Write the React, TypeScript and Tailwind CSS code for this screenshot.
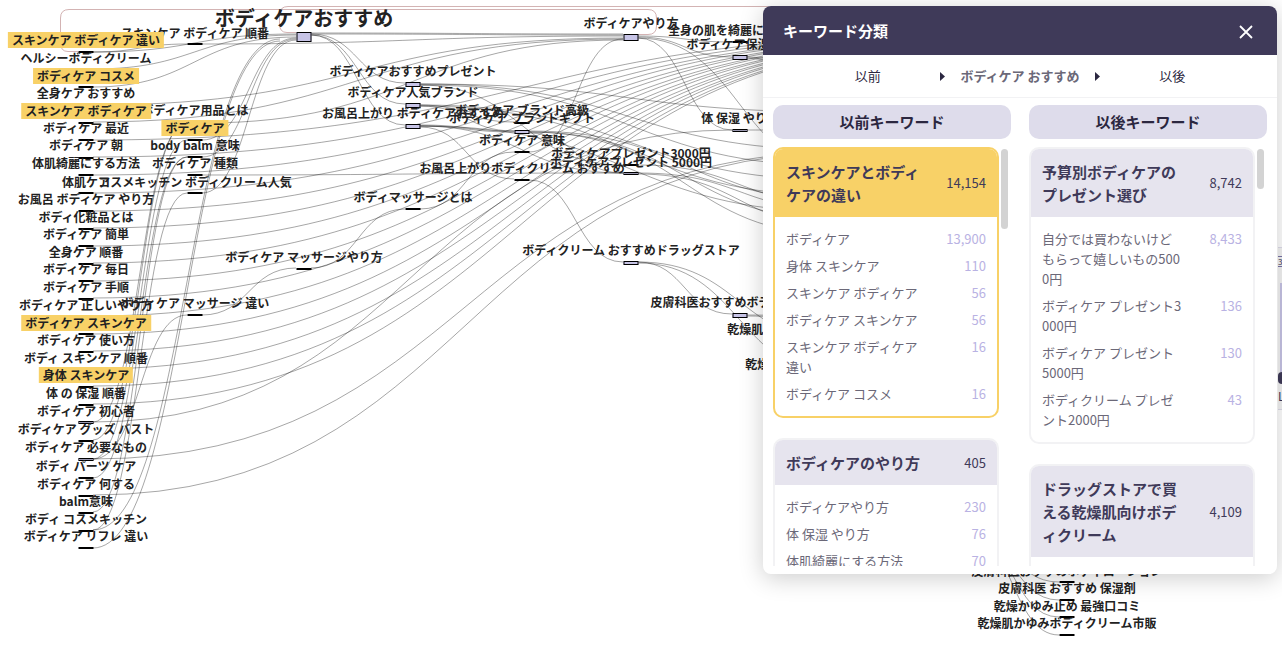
type Tone = 'flat' | 'slim' | 'fill' | 'root';

type GraphNode = {
	x: number;
	y: number;
	label: string;
	top: number;
	h?: number;
	marked?: boolean;
	root?: boolean;
};

type Group = {
	title: string;
	total: string;
	active?: boolean;
	rows: { word: string; count: string }[];
};

// columns are listed right to left, so that the left labels stay on top
const nodes: GraphNode[] = [
	{ x: 1067, y: 571, top: 581, label: '皮膚科医おすすめボディローション' },
	{ x: 1067, y: 588, top: 599, label: '皮膚科医 おすすめ 保湿剤' },
	{ x: 1067, y: 606, top: 616, label: '乾燥かゆみ止め 最強口コミ' },
	{ x: 1067, y: 623, top: 634, label: '乾燥肌かゆみボディクリーム市販' },
	{ x: 848, y: 329, top: 340, label: '乾燥肌用ボディクリーム 最強ドラッグストア' },
	{ x: 848, y: 364, top: 375, label: '乾燥肌用ボディクリーム おすすめ市販' },
	{ x: 740, y: 30, top: 41, label: '全身の肌を綺麗にする方法' },
	{ x: 740, y: 44, top: 55, h: 5, label: 'ボディケア保湿方法' },
	{ x: 740, y: 118, top: 129, h: 3, label: '体 保湿 やり方' },
	{ x: 740, y: 302, top: 313, h: 5, label: '皮膚科医おすすめボディクリーム' },
	{ x: 631, y: 23, top: 34, h: 7, label: 'ボディケアやり方' },
	{ x: 631, y: 153, top: 164, label: 'ボディケアプレゼント3000円' },
	{ x: 631, y: 162, top: 172, h: 3, label: 'ボディケアプレゼント 5000円' },
	{ x: 631, y: 250, top: 261, h: 4, label: 'ボディクリーム おすすめドラッグストア' },
	{ x: 522, y: 110, top: 122, label: 'ボディケア ブランド高級' },
	{ x: 522, y: 118, top: 130, h: 4, label: 'ボディケア ブランドギフト' },
	{ x: 522, y: 140, top: 151, label: 'ボディケア 意味' },
	{ x: 522, y: 168, top: 179, label: 'お風呂上がりボディクリーム おすすめ' },
	{ x: 413, y: 71, top: 82, h: 5, label: 'ボディケアおすすめプレゼント' },
	{ x: 413, y: 92, top: 103, h: 5, label: 'ボディケア人気ブランド' },
	{ x: 413, y: 113, top: 124, h: 5, label: 'お風呂上がり ボディケアおすすめ' },
	{ x: 413, y: 197, top: 208, label: 'ボディマッサージとは' },
	{ x: 304, y: 18, top: 32, h: 10, label: 'ボディケアおすすめ', root: true },
	{ x: 304, y: 257, top: 268, label: 'ボディケア マッサージやり方' },
	{ x: 195, y: 33, top: 43, label: 'スキンケア ボディケア 順番' },
	{ x: 195, y: 110, top: 122, label: 'ボディケア用品とは' },
	{ x: 195, y: 128, top: 139, label: 'ボディケア', marked: true },
	{ x: 195, y: 145, top: 156, label: 'body balm 意味' },
	{ x: 195, y: 163, top: 174, label: 'ボディケア 種類' },
	{ x: 195, y: 182, top: 192, label: 'コスメキッチン ボディクリーム人気' },
	{ x: 195, y: 303, top: 314, label: 'ボディケア マッサージ 違い' },
	{ x: 86, y: 40, top: 51, label: 'スキンケア ボディケア 違い', marked: true },
	{ x: 86, y: 58, top: 68, label: 'ヘルシーボディクリーム' },
	{ x: 86, y: 76, top: 86, label: 'ボディケア コスメ', marked: true },
	{ x: 86, y: 93, top: 104, label: '全身ケア おすすめ' },
	{ x: 86, y: 111, top: 122, label: 'スキンケア ボディケア', marked: true },
	{ x: 86, y: 128, top: 139, label: 'ボディケア 最近' },
	{ x: 86, y: 145, top: 157, label: 'ボディケア 朝' },
	{ x: 86, y: 163, top: 174, label: '体肌綺麗にする方法' },
	{ x: 86, y: 182, top: 192, label: '体肌ケア' },
	{ x: 86, y: 199, top: 210, label: 'お風呂 ボディケア やり方' },
	{ x: 86, y: 217, top: 228, label: 'ボディ化粧品とは' },
	{ x: 86, y: 234, top: 245, label: 'ボディケア 簡単' },
	{ x: 86, y: 252, top: 263, label: '全身ケア 順番' },
	{ x: 86, y: 269, top: 280, label: 'ボディケア 毎日' },
	{ x: 86, y: 287, top: 298, label: 'ボディケア 手順' },
	{ x: 86, y: 305, top: 316, label: 'ボディケア 正しいやり方' },
	{ x: 86, y: 323, top: 333, label: 'ボディケア スキンケア', marked: true },
	{ x: 86, y: 340, top: 351, label: 'ボディケア 使い方' },
	{ x: 86, y: 358, top: 368, label: 'ボディ スキンケア 順番' },
	{ x: 86, y: 375, top: 386, label: '身体 スキンケア', marked: true },
	{ x: 86, y: 393, top: 404, label: '体 の 保湿 順番' },
	{ x: 86, y: 411, top: 421, h: 3, label: 'ボディケア 初心者' },
	{ x: 86, y: 429, top: 440, label: 'ボディケア グッズ バスト' },
	{ x: 86, y: 447, top: 458, h: 3, label: 'ボディケア 必要なもの' },
	{ x: 86, y: 466, top: 477, label: 'ボディ パーツ ケア' },
	{ x: 86, y: 484, top: 495, label: 'ボディケア 何する' },
	{ x: 86, y: 501, top: 512, label: 'balm意味' },
	{ x: 86, y: 519, top: 530, label: 'ボディ コスメキッチン' },
	{ x: 86, y: 536, top: 547, label: 'ボディケア リフレ 違い' },
];

// [x0, y0, x1, y1]
const links: [number, number, number, number][] = [
	[93, 52, 187, 44], [93, 52, 296, 34], [93, 69, 296, 35], [93, 87, 296, 37],
	[93, 105, 623, 38], [93, 122, 623, 39], [202, 123, 623, 40], [202, 44, 623, 36],
	[93, 140, 950, 36], [93, 157, 950, 37], [93, 175, 950, 38], [93, 193, 950, 38],
	[93, 211, 950, 39], [93, 228, 950, 39], [93, 246, 950, 40], [93, 263, 950, 40],
	[93, 281, 950, 41], [93, 298, 950, 41], [93, 316, 950, 42], [93, 334, 950, 42],
	[93, 351, 950, 43], [93, 369, 950, 43], [93, 386, 950, 44], [93, 404, 950, 44],
	[93, 422, 732, 130], [93, 459, 841, 152], [93, 495, 841, 153],
	[93, 422, 187, 123], [93, 440, 187, 123], [93, 459, 187, 140], [93, 478, 187, 157],
	[93, 512, 187, 157], [93, 530, 187, 193], [93, 459, 187, 315],
	[93, 530, 280, 39], [93, 548, 280, 41],
	[202, 140, 296, 38], [202, 157, 296, 39], [202, 193, 296, 40],
	[202, 175, 623, 173], [202, 315, 296, 268], [311, 268, 405, 209], [420, 209, 514, 152],
	[311, 33, 623, 34], [311, 34, 623, 35], [311, 34, 405, 83], [311, 35, 405, 104], [311, 35, 405, 125],
	[420, 84, 841, 112], [420, 84, 841, 150], [420, 85, 841, 166], [420, 85, 623, 165],
	[420, 105, 841, 180], [420, 106, 841, 196], [420, 105, 514, 122], [420, 106, 514, 131],
	[420, 125, 514, 131], [420, 126, 514, 132], [420, 126, 623, 173], [420, 126, 841, 212], [420, 127, 514, 179],
	[529, 131, 841, 200], [529, 132, 841, 220], [529, 132, 841, 235], [529, 133, 623, 173],
	[529, 152, 623, 39], [529, 180, 623, 262],
	[638, 165, 841, 204], [638, 173, 841, 210], [638, 174, 841, 226],
	[638, 36, 732, 42], [638, 37, 732, 57], [638, 38, 732, 130], [638, 38, 841, 170],
	[747, 57, 841, 86], [747, 58, 841, 100], [747, 130, 841, 130],
	[638, 262, 732, 314], [638, 262, 841, 341], [638, 263, 841, 376],
	[747, 315, 841, 318], [747, 316, 841, 324],
	[965, 530, 1059, 582], [965, 530, 1059, 600], [965, 531, 1059, 617], [965, 531, 1059, 635],
];

const before: Group[] = [
	{
		title: 'スキンケアとボディケアの違い',
		total: '14,154',
		active: true,
		rows: [
			{ word: 'ボディケア', count: '13,900' },
			{ word: '身体 スキンケア', count: '110' },
			{ word: 'スキンケア ボディケア', count: '56' },
			{ word: 'ボディケア スキンケア', count: '56' },
			{ word: 'スキンケア ボディケア 違い', count: '16' },
			{ word: 'ボディケア コスメ', count: '16' },
		],
	},
	{
		title: 'ボディケアのやり方',
		total: '405',
		rows: [
			{ word: 'ボディケアやり方', count: '230' },
			{ word: '体 保湿 やり方', count: '76' },
			{ word: '体肌綺麗にする方法', count: '70' },
		],
	},
];

const after: Group[] = [
	{
		title: '予算別ボディケアのプレゼント選び',
		total: '8,742',
		rows: [
			{ word: '自分では買わないけどもらって嬉しいもの5000円', count: '8,433' },
			{ word: 'ボディケア プレゼント3000円', count: '136' },
			{ word: 'ボディケア プレゼント 5000円', count: '130' },
			{ word: 'ボディクリーム プレゼント2000円', count: '43' },
		],
	},
	{
		title: 'ドラッグストアで買える乾燥肌向けボディクリーム',
		total: '4,109',
		rows: [],
	},
];

const curve = ([x0, y0, x1, y1]: [number, number, number, number]) => {
	const mid = (x0 + x1) / 2;
	return `M${x0} ${y0}C${mid} ${y0} ${mid} ${y1} ${x1} ${y1}`;
};

const nodeTone = (node: GraphNode): Tone => {
	if (node.root) return 'root';
	if (!node.h) return 'flat';
	return node.h > 3 ? 'fill' : 'slim';
};

const toneClass: Record<Tone, string> = {
	flat: 'bg-black',
	slim: 'border border-black bg-[#9a98b0]',
	fill: 'border border-black bg-[#c7c4e6]',
	root: 'border border-black bg-[#c7c4e6]',
};

const KeywordGraph = () => (
	<div className="absolute inset-0 overflow-hidden">
		<svg className="absolute left-0 top-0 h-full w-full" fill="none">
			<g stroke="#d3b3b3">
				<path d="M78 51.500H68Q60.500 51.500 60.500 43V18Q60.500 9.500 69 9.500H648Q656.500 9.500 656.500 18V26Q656.500 34.500 648 34.500H638" />
				<path d="M296 32.500H287Q279.500 32.500 279.500 24V15Q279.500 6.500 288 6.500H900" />
			</g>
			<g stroke="#000" strokeOpacity="0.35">
				{links.map((link, index) => (
					<path key={index} d={curve(link)} />
				))}
			</g>
		</svg>
		{nodes.map((node) => (
			<div key={`${node.x}-${node.y}`}>
				<div
					className={`absolute w-[15px] -translate-x-1/2 ${toneClass[nodeTone(node)]}`}
					style={{ left: node.x, top: node.top, height: node.h ?? 2 }}
				/>
				<div
					className={`absolute -translate-x-1/2 -translate-y-1/2 whitespace-nowrap font-bold text-[#222] ${node.root ? 'text-xl' : 'text-xs'} ${node.marked ? 'bg-[#f8d167] px-1' : ''}`}
					style={{ left: node.x, top: node.y }}
				>
					{node.label}
				</div>
			</div>
		))}
	</div>
);

// zoom control, nearly all of it lies beyond the edge or under the panel
const ZoomControl = () => (
	<div className="absolute right-0 top-[247px] flex h-[163px] w-1 flex-col overflow-hidden border-y border-[#dedceb] bg-[#f4f4f4] text-[#3f3a59]">
		<span className="mt-2 border-y border-[#7a74a8] text-[8px] leading-[9px]">3</span>
		<span className="ml-0.5 mt-4 h-[89px] bg-[#c7c4e6]" />
		<span className="h-3 rounded-l bg-[#3f3a59]" />
		<span className="mt-1 text-xs">L</span>
	</div>
);

const GroupCard = ({ group }: { group: Group }) => (
	<section className={`shrink-0 overflow-hidden rounded-[10px] border-2 ${group.active ? 'border-[#f8d167]' : 'border-[#f2f2f4]'}`}>
		<div className={`flex items-center justify-between px-[11px] py-[11px] text-[#3f3a59] ${group.active ? 'bg-[#f8d167]' : 'bg-[#e6e4ee]'}`}>
			<h3 className="w-[142px] break-all text-[15px] font-bold leading-[23px]">{group.title}</h3>
			<span className="text-[13px]">{group.total}</span>
		</div>
		<ul className="flex flex-col gap-[7px] px-[11px] py-3 text-[13px] leading-5 text-[#6b6878]">
			{group.rows.map((row) => (
				<li key={row.word} className="flex justify-between">
					<span className="w-[142px] break-all">{row.word}</span>
					<span className="text-[#b9b2e3]">{row.count}</span>
				</li>
			))}
		</ul>
	</section>
);

const GroupColumn = ({ heading, groups, thumb }: { heading: string; groups: Group[]; thumb: string }) => (
	<div className="flex min-h-0 w-0 flex-1 flex-col gap-2">
		<h2 className="rounded-[10px] bg-[#dedceb] text-center text-[15px] font-bold leading-[34px] text-[#2b2740]">{heading}</h2>
		<div className="flex min-h-0 flex-1 gap-0.5 overflow-hidden">
			<div className="flex flex-1 flex-col gap-5">
				{groups.map((group) => (
					<GroupCard key={group.title} group={group} />
				))}
			</div>
			<div className="w-2.5 pr-[3px] pt-0.5">
				<div className={`rounded-full bg-[#d3d3d3] ${thumb}`} />
			</div>
		</div>
	</div>
);

const Caret = () => (
	<svg width="5" height="9" viewBox="0 0 5 9" fill="#2b2740">
		<path d="M0 0L5 4.500L0 9Z" />
	</svg>
);

const KeywordPanel = () => (
	<aside className="relative mr-[5px] mt-1.5 flex h-[568px] w-[514px] flex-col overflow-hidden rounded-lg bg-white shadow-[0_4px_24px_rgba(0,0,0,0.2)]">
		<header className="flex h-[49px] shrink-0 items-center justify-between bg-[#3f3a59] px-5 pt-0.5 text-white">
			<h1 className="text-[15px] font-bold">キーワード分類</h1>
			<button type="button" aria-label="閉じる" className="p-1">
				<svg width="14" height="14" viewBox="0 0 14 14" fill="none" stroke="currentColor" strokeWidth="1.800">
					<path d="M1 1L13 13M13 1L1 13" />
				</svg>
			</button>
		</header>
		<div className="flex h-[43px] shrink-0 items-center border-b border-[#f2f2f4] text-[13px] text-[#2b2740]">
			<span className="flex-1 pl-8 text-center">以前</span>
			<div className="flex items-center gap-[15px]">
				<Caret />
				<strong className="font-bold text-[#6b6878]">ボディケア おすすめ</strong>
				<Caret />
			</div>
			<span className="flex-1 pr-8 text-center">以後</span>
		</div>
		<div className="flex min-h-0 flex-1 gap-[18px] px-2.5 pb-2 pt-[7px]">
			<GroupColumn heading="以前キーワード" groups={before} thumb="h-20" />
			<GroupColumn heading="以後キーワード" groups={after} thumb="h-10" />
		</div>
	</aside>
);

export default function App() {
	return (
		<main className="relative flex min-h-screen items-start justify-end overflow-hidden bg-white font-['Noto_Sans_CJK_JP','Noto_Sans',sans-serif]">
			<KeywordGraph />
			<ZoomControl />
			<KeywordPanel />
		</main>
	);
}
